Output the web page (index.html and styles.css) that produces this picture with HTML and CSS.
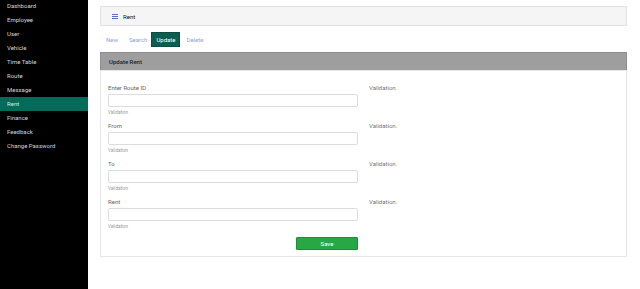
FILE: index.html
```html
<!DOCTYPE html>
<html lang="en">
<head>
  <meta charset="UTF-8">
  <meta name="viewport" content="width=device-width, initial-scale=1">
  <title>Rent</title>
  <link rel="stylesheet" href="styles.css">
</head>
<body>
  <div class="layout">
    <nav class="sidebar">
      <a href="#">Dashboard</a>
      <a href="#">Employee</a>
      <a href="#">User</a>
      <a href="#">Vehicle</a>
      <a href="#">Time Table</a>
      <a href="#">Route</a>
      <a href="#">Message</a>
      <a href="#" class="active">Rent</a>
      <a href="#">Finance</a>
      <a href="#">Feedback</a>
      <a href="#">Change Password</a>
    </nav>

    <main class="content">
      <div class="topbar">
        <span class="menu-icon">
          <svg width="6" height="5" viewBox="0 0 6 5"><path d="M0 0.5h6M0 2.5h6M0 4.5h6" stroke="#5a6fd0" stroke-width="1"/></svg>
        </span>
        <span class="page-title">Rent</span>
      </div>

      <div class="tabs">
        <a href="#">New</a>
        <a href="#">Search</a>
        <a href="#" class="current">Update</a>
        <a href="#">Delete</a>
      </div>

      <div class="panel">
        <div class="panel-head">Update Rent</div>
        <form class="panel-body">
          <div class="row">
            <div class="field">
              <label for="route">Enter Route ID</label>
              <input type="text" id="route">
              <small>Validation</small>
            </div>
            <div class="note">Validation.</div>
          </div>
          <div class="row">
            <div class="field">
              <label for="from">From</label>
              <input type="text" id="from">
              <small>Validation</small>
            </div>
            <div class="note">Validation.</div>
          </div>
          <div class="row">
            <div class="field">
              <label for="to">To</label>
              <input type="text" id="to">
              <small>Validation</small>
            </div>
            <div class="note">Validation.</div>
          </div>
          <div class="row">
            <div class="field">
              <label for="rent">Rent</label>
              <input type="text" id="rent">
              <small>Validation</small>
            </div>
            <div class="note">Validation.</div>
          </div>
          <div class="actions">
            <button type="button">Save</button>
          </div>
        </form>
      </div>
    </main>
  </div>
</body>
</html>
```

FILE: styles.css
```css
body {
  margin: 0;
  padding: 0;
  font-family: Roboto, "Open Sans", sans-serif;
  font-size: 6px;
  background-color: #fff;
}
.layout {
  display: flex;
  height: 289px;
  overflow: hidden;
}
.sidebar {
  width: 88px;
  flex-shrink: 0;
  background-color: #000;
  display: flex;
  flex-direction: column;
  margin-top: -1px;
}
.sidebar a {
  display: block;
  height: 14px;
  line-height: 14px;
  padding-left: 7px;
  color: #d6d6d6;
  text-decoration: none;
}
.sidebar a.active {
  background-color: #046b5b;
  color: #d6e8e3;
}
.content {
  flex: 1;
  padding: 6px 13px 0 12px;
}
.topbar {
  height: 18px;
  border: 1px solid #e2e2e2;
  background-color: #f5f5f5;
  display: flex;
  align-items: center;
  padding-left: 11px;
}
.menu-icon {
  display: flex;
  margin-right: 5px;
}
.page-title {
  color: #111;
}
.tabs {
  display: flex;
  align-items: center;
  margin-top: 6px;
  height: 15px;
}
.tabs a {
  color: #8ea3e3;
  text-decoration: none;
  padding: 0 5px 0 6px;
  line-height: 15px;
  height: 15px;
}
.tabs a.current {
  background-color: #0d5d4f;
  color: #fff;
  border: 1px solid #0a4c41;
  margin-left: -1px;
  padding: 0 4px;
  line-height: 13px;
  height: 13px;
}
.panel {
  margin-top: 5px;
}
.panel-head {
  height: 17px;
  line-height: 17px;
  background-color: #9e9e9e;
  border: 1px solid #8e8e8e;
  border-bottom: none;
  padding-left: 8px;
  color: #222;
  font-weight: 500;
}
.panel-body {
  border: 1px solid #e6e6e6;
  padding: 13px 8px 6px 7px;
  margin: 0;
}
.row {
  display: grid;
  grid-template-columns: 250px 1fr;
  column-gap: 11px;
  padding-bottom: 5px;
}
.field {
  display: flex;
  flex-direction: column;
}
.field label {
  line-height: 8px;
  color: #666;
}
.field input {
  margin-top: 2px;
  height: 13px;
  box-sizing: border-box;
  border: 1px solid #dcdcdc;
  border-radius: 2px;
  padding: 0 4px;
  font-size: 6px;
}
.field small {
  margin-top: 2px;
  line-height: 8px;
  font-size: 4.5px;
  color: #999;
}
.note {
  line-height: 8px;
  color: #777;
}
.actions {
  width: 250px;
  display: flex;
  justify-content: flex-end;
  margin-top: 1px;
}
.actions button {
  width: 62px;
  height: 13px;
  background-color: #28a745;
  border: 1px solid #1f8e39;
  border-radius: 1px;
  color: #fff;
  font-family: Roboto, "Open Sans", sans-serif;
  font-size: 6px;
  padding: 0;
}
```
